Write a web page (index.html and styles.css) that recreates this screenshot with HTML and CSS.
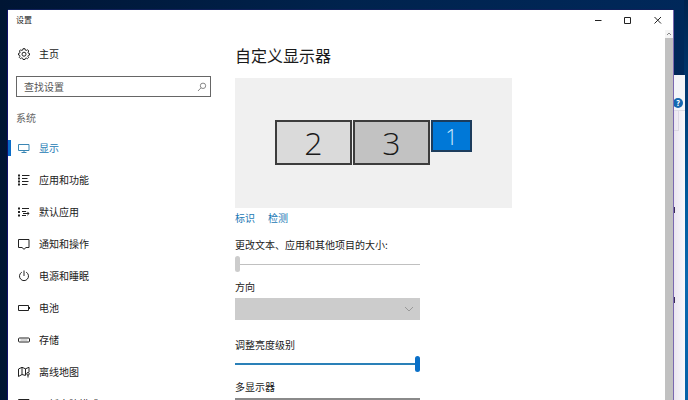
FILE: index.html
```html
<!DOCTYPE html>
<html lang="zh-CN">
  <head>
    <meta charset="UTF-8" />
    <meta name="viewport" content="width=device-width, initial-scale=1" />
    <title>设置</title>
    <link rel="stylesheet" href="styles.css" />
  </head>
  <body>
    <!-- window behind the settings -->
    <div class="back-window">
      <div class="back-bar"><span class="help">?</span></div>
      <div class="back-tools"></div>
      <div class="marks"><i></i><i></i></div>
    </div>

    <div class="window">
      <header class="titlebar">
        <span class="title">设置</span>
        <button type="button" aria-label="最小化">
          <svg width="8" height="8" viewBox="0 0 8 8"><path d="M1 4.500h6.500" /></svg>
        </button>
        <button type="button" aria-label="最大化">
          <svg width="8" height="8" viewBox="0 0 8 8"><path d="M.5 1.500h6v6h-6z" /></svg>
        </button>
        <button type="button" aria-label="关闭">
          <svg width="8" height="8" viewBox="0 0 8 8"><path d="M.5 1l6.500 6.500M7 1L.5 7.500" /></svg>
        </button>
      </header>

      <div class="content">
        <aside class="sidebar">
          <a class="home" href="#">
            <svg class="icon" viewBox="0 0 12 12">
              <path d="M5 .7h2l.3 1.400 1 .4 1.200-.8L10.800 3 10 4.200l.3 1 1.200.3v1.600l-1.200.3-.4 1 .7 1.100-1.200 1.200-1.200-.7-.9.400-.3 1.100H5l-.3-1.200-1-.4-1.200.7L1.300 9.400 2 8.200l-.4-1L.5 7V5.400l1.200-.3.400-1L1.400 3l1.200-1.200 1.200.7.900-.4z" />
              <circle cx="6" cy="6.200" r="2" />
            </svg>
            主页
          </a>
          <div class="search">
            <input type="text" placeholder="查找设置" aria-label="查找设置" />
            <svg width="10" height="10" viewBox="0 0 10 10">
              <circle cx="6" cy="3.800" r="2.700" />
              <path d="M4 5.800L1 9" />
            </svg>
          </div>
          <h2>系统</h2>
          <nav>
            <a class="active" href="#">
              <svg class="icon" viewBox="0 0 12 12"><path d="M.5 2.500h10.500v6H.5zM3.500 10.500h5M6 8.500v2" /></svg>
              显示
            </a>
            <a href="#">
              <svg class="icon" viewBox="0 0 12 12">
                <path d="M4 1.500h7.500M4 4.500h5.500M4 7.500h6.500M4 10.500h5.500" />
                <path class="dots" d="M0 .5h2v2H0zM0 3.500h2v2H0zM0 6.500h2v2H0zM0 9.500h2v2H0z" />
              </svg>
              应用和功能
            </a>
            <a href="#">
              <svg class="icon" viewBox="0 0 12 12">
                <path d="M4 2.500h7M4 5.500h4M4 9.500h4M5 7.500h6M9.300 5.800L11 7.500 9.300 9.200" />
                <path class="dots" d="M0 1.500h2v2H0zM0 5h2v2H0zM0 8.500h2v2H0z" />
              </svg>
              默认应用
            </a>
            <a href="#">
              <svg class="icon" viewBox="0 0 12 12"><path d="M.5 1.500h10.500v8H8L6 11.300 4 9.500H.5z" /></svg>
              通知和操作
            </a>
            <a href="#">
              <svg class="icon" viewBox="0 0 12 12"><path d="M6 .5v5.500M3.800 2.200a4.500 4.500 0 1 0 4.400 0" /></svg>
              电源和睡眠
            </a>
            <a href="#">
              <svg class="icon" viewBox="0 0 12 12"><path d="M.5 3.500h10v5H.5zM11.500 5v2" /></svg>
              电池
            </a>
            <a href="#">
              <svg class="icon" viewBox="0 0 12 12">
                <rect x=".5" y="4" width="11" height="4" rx="1" />
                <path class="light" d="M2.500 6h7" />
              </svg>
              存储
            </a>
            <a href="#">
              <svg class="icon" viewBox="0 0 12 12">
                <path d="M7.500 9.500L4 8.500.5 10.500V3L4 1.300l3.500 1.500L11 1.300V6M4 1.300v7.200M7.500 2.800v6.500" />
                <circle cx="10" cy="7.800" r="1.300" />
                <path d="M10 9v2.500" />
              </svg>
              离线地图
            </a>
            <a href="#">
              <svg class="icon" viewBox="0 0 12 12"><path d="M.5 1.500h10.500v8H.5zM3 7.500h6" /></svg>
              平板电脑模式
            </a>
          </nav>
        </aside>

        <main>
          <h1>自定义显示器</h1>
          <div class="displays">
            <div class="monitor">2</div>
            <div class="monitor selected">3</div>
            <div class="monitor primary">1</div>
          </div>
          <div class="links">
            <a href="#">标识</a>
            <a href="#">检测</a>
          </div>

          <div class="field">
            <label for="scale">更改文本、应用和其他项目的大小:</label>
            <input class="off" type="range" id="scale" min="0" max="100" value="0" disabled />
          </div>

          <div class="field">
            <label for="orientation">方向</label>
            <div class="select">
              <select id="orientation" disabled><option></option></select>
              <svg width="10" height="6" viewBox="0 0 10 6"><path d="M1 1l4 4 4-4" /></svg>
            </div>
          </div>

          <div class="field brightness">
            <label for="brightness">调整亮度级别</label>
            <input type="range" id="brightness" min="0" max="100" value="100" />
          </div>

          <div class="field">
            <label for="multi">多显示器</label>
            <div class="select enabled">
              <select id="multi"><option></option></select>
              <svg width="10" height="6" viewBox="0 0 10 6"><path d="M1 1l4 4 4-4" /></svg>
            </div>
          </div>
        </main>

        <div class="scrollbar">
          <button type="button" aria-label="向上滚动">
            <svg width="6" height="4" viewBox="0 0 6 4"><path d="M1 3l2-2 2 2" /></svg>
          </button>
          <div class="thumb"></div>
        </div>
      </div>
    </div>
  </body>
</html>
```
FILE: styles.css
```css
* {
  box-sizing: border-box;
}
body {
  margin: 0;
  height: 100vh;
  overflow: hidden;
  padding: 10px 15px 0 8px;
  font-family: "Noto Sans CJK SC", sans-serif;
  font-size: 10px;
  line-height: 16px;
  color: #1a1a1a;
  background:
    linear-gradient(#00234f, #003a73 25%, #005a9e 50%, #0a68b0 70%, #0560a8) right / 4px 100% no-repeat,
    linear-gradient(90deg, #001534, #00234d 50%, #00285a);
}
h1,
h2 {
  margin: 0;
  font-weight: 400;
}
a {
  color: inherit;
  text-decoration: none;
}
button {
  padding: 0;
  border: none;
  background: none;
  display: flex;
  align-items: center;
  justify-content: center;
}
svg {
  fill: none;
  stroke: #222;
  flex: none;
}

/* Back window */
.back-window {
  position: absolute;
  top: 75px;
  right: 3px;
  bottom: 0;
  width: 13px;
  background: linear-gradient(90deg, #e8e2ee, #f8f8fc);
}
.back-bar {
  height: 36px;
  padding-top: 23px;
  background: #f3f5f9;
  border-bottom: 1px solid #dcdce6;
}
.help {
  display: block;
  width: 10px;
  height: 10px;
  margin-left: 1px;
  border-radius: 50%;
  background: #1468b0;
  color: #fff;
  font-size: 8px;
  font-weight: 700;
  line-height: 10px;
  text-align: center;
}
.back-tools {
  height: 20px;
  border-right: 1px solid #dcd8e4;
  border-bottom: 1px solid #dcd8e4;
  margin-right: 6px;
}
.marks {
  display: grid;
  gap: 84px;
  padding-top: 76px;
}
.marks i {
  width: 3px;
  height: 6px;
  background: #3a2d55;
}

/* Settings window */
.window {
  position: relative;
  height: 100%;
  display: flex;
  flex-direction: column;
  background: #fff;
  box-shadow: 1px 0 #7a68b0, -1px 0 #10106a, 0 -1px #10205a;
}
.titlebar {
  display: flex;
  height: 20px;
  flex: none;
}
.title {
  flex: 1;
  padding-left: 8px;
  font-size: 8px;
  line-height: 20px;
}
.titlebar button {
  width: 30px;
}
.content {
  display: flex;
  flex: 1;
  min-height: 0;
  overflow: hidden;
}

/* Sidebar */
.sidebar {
  width: 227px;
  flex: none;
}
.icon {
  width: 12px;
  height: 12px;
}
.home {
  display: flex;
  align-items: center;
  gap: 9px;
  height: 20px;
  margin-top: 14px;
  padding-left: 10px;
}
.search {
  display: flex;
  align-items: center;
  height: 21px;
  margin: 12px 24px 0 8px;
  padding: 0 3px 0 7px;
  border: 1px solid #666;
}
.search input {
  flex: 1;
  min-width: 0;
  padding: 0;
  border: none;
  outline: none;
  font: inherit;
}
.search input::placeholder {
  color: #555;
}
.search svg {
  stroke: #888;
}
h2 {
  margin: 13px 0 6px 8px;
  font-size: 10px;
  color: #666;
}
nav a {
  display: flex;
  align-items: center;
  gap: 9px;
  height: 32px;
}
nav a::before {
  content: "";
  width: 3px;
  height: 16px;
  margin-right: -2px;
}
nav .active {
  color: #1a78b4;
}
nav .active::before {
  background: #0a6cc8;
}
nav .active svg {
  stroke: #3a86b4;
}
.dots {
  fill: #222;
  stroke: none;
}
.light {
  stroke: #aaa;
}

/* Main */
main {
  flex: 1;
  min-width: 0;
}
h1 {
  margin: 13px 0 11px;
  font-size: 16px;
  line-height: 24px;
}
.displays {
  display: flex;
  gap: 1px;
  max-width: 277px;
  height: 130px;
  padding: 42px 40px 0;
  background: #f0f0f0;
}
.monitor {
  display: flex;
  align-items: center;
  justify-content: center;
  width: 77px;
  height: 45px;
  border: 2px solid #3c3c3c;
  background: #dadada;
  font-family: "Open Sans", sans-serif;
  font-size: 32px;
  font-weight: 300;
}
.selected {
  background: #c2c2c2;
}
.primary {
  width: 41px;
  height: 32px;
  border-color: #1c3c5c;
  background: #0078d7;
  color: #cdeaff;
  font-size: 22px;
}
.links {
  display: flex;
  gap: 13px;
  margin: 2px 0 11px;
  color: #1a78b4;
}
.field {
  max-width: 185px;
  margin-bottom: 7px;
}
.field label {
  display: block;
}
.brightness {
  margin-top: 17px;
}
input[type="range"] {
  appearance: none;
  display: block;
  width: 100%;
  height: 16px;
  margin: 3px 0 0;
  background: linear-gradient(#2a80b8, #2a80b8) center / 100% 2px no-repeat;
}
input[type="range"]::-webkit-slider-thumb {
  appearance: none;
  width: 5px;
  height: 16px;
  border-radius: 3px;
  background: #0a70c8;
}
input[type="range"].off {
  background: linear-gradient(#c0c0c0, #c0c0c0) center / 100% 1px no-repeat;
}
input[type="range"].off::-webkit-slider-thumb {
  background: #ccc;
}
.select {
  display: flex;
  align-items: center;
  height: 22px;
  margin-top: 3px;
  padding-right: 6px;
  background: #ccc;
}
.select select {
  appearance: none;
  flex: 1;
  height: 100%;
  border: none;
  background: none;
  font: inherit;
}
.select svg {
  stroke: #999;
  pointer-events: none;
}
.enabled {
  border: 2px solid #8a8a8a;
}

/* Scrollbar */
.scrollbar {
  display: flex;
  flex-direction: column;
  width: 8px;
  background: #f4f4f4;
}
.scrollbar button {
  height: 8px;
}
.scrollbar svg {
  stroke: #888;
}
.thumb {
  flex: 1;
  background: #c1c1c1;
}
```
